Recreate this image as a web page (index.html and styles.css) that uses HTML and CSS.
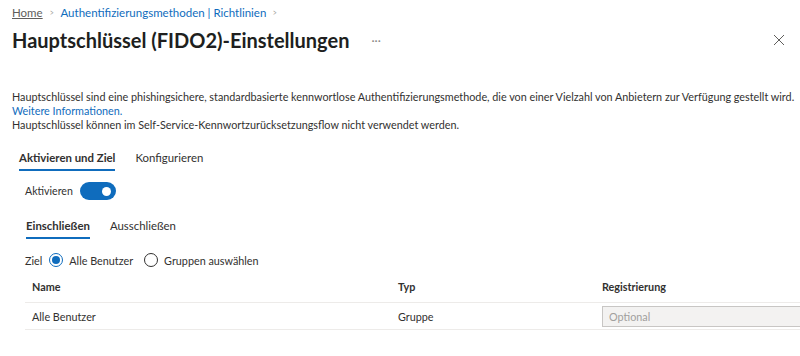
FILE: index.html
```html
<!DOCTYPE html>
<html lang="de">
<head>
    <meta charset="UTF-8">
    <meta name="viewport" content="width=device-width, initial-scale=1.0">
    <title>Hauptschlüssel (FIDO2)-Einstellungen</title>
    <link rel="stylesheet" href="styles.css">
</head>
<body>
    <nav class="breadcrumb">
        <a class="crumb home" href="#">Home</a>
        <span class="sep">&gt;</span>
        <a class="crumb" href="#">Authentifizierungsmethoden | Richtlinien</a>
        <span class="sep">&gt;</span>
    </nav>

    <header class="title-bar">
        <h1>Hauptschlüssel (FIDO2)-Einstellungen</h1>
        <span class="more">···</span>
        <button class="close" aria-label="Schließen">
            <svg width="12" height="12" viewBox="0 0 12 12"><path d="M1 1 L11 11 M11 1 L1 11" stroke="#605e5c" stroke-width="1"/></svg>
        </button>
    </header>

    <section class="intro">
        <p>Hauptschlüssel sind eine phishingsichere, standardbasierte kennwortlose Authentifizierungsmethode, die von einer Vielzahl von Anbietern zur Verfügung gestellt wird.</p>
        <p><a href="#">Weitere Informationen.</a></p>
        <p>Hauptschlüssel können im Self-Service-Kennwortzurücksetzungsflow nicht verwendet werden.</p>
    </section>

    <div class="tabs main-tabs">
        <button class="tab active">Aktivieren und Ziel</button>
        <button class="tab">Konfigurieren</button>
    </div>

    <div class="panel">
        <div class="toggle-row">
            <span>Aktivieren</span>
            <span class="toggle on"><span class="knob"></span></span>
        </div>

        <div class="tabs sub-tabs">
            <button class="tab active">Einschließen</button>
            <button class="tab">Ausschließen</button>
        </div>

        <div class="target-row">
            <span>Ziel</span>
            <label class="radio"><span class="dot checked"></span>Alle Benutzer</label>
            <label class="radio"><span class="dot"></span>Gruppen auswählen</label>
        </div>

        <table class="grid">
            <tr>
                <th class="col-name">Name</th>
                <th class="col-type">Typ</th>
                <th>Registrierung</th>
            </tr>
            <tr>
                <td>Alle Benutzer</td>
                <td>Gruppe</td>
                <td><div class="select disabled">Optional</div></td>
            </tr>
        </table>
    </div>
</body>
</html>
```

FILE: styles.css
```css
body {
    font-family: "Lato", "Noto Sans", sans-serif;
    font-size: 10.8px;
    color: #323130;
    margin: 0;
    padding: 0;
    background-color: #fff;
    overflow: hidden;
}

a {
    color: #0f6cbd;
    text-decoration: none;
}

button {
    font-family: inherit;
    background: none;
    border: none;
    padding: 0;
    cursor: pointer;
    color: inherit;
}

.breadcrumb {
    display: flex;
    align-items: center;
    gap: 6px;
    padding: 3px 12px 0;
    height: 18px;
    font-size: 11.5px;
}

.breadcrumb .home {
    color: #605e5c;
    text-decoration: underline;
}

.breadcrumb .sep {
    color: #a19f9d;
    font-size: 10px;
    transform: scaleX(0.7);
}

.title-bar {
    display: flex;
    align-items: center;
    padding: 0 12px;
    height: 38px;
}

.title-bar h1 {
    margin: 0;
    font-size: 20px;
    font-weight: 700;
    color: #201f1e;
}

.more {
    margin-left: 22px;
    color: #8a8886;
    font-size: 12px;
}

.close {
    margin-left: auto;
    margin-right: 3px;
    display: flex;
}

.intro {
    padding: 31px 0 0 12px;
    line-height: 14px;
}

.intro p {
    margin: 0;
    white-space: nowrap;
}

.tabs {
    display: flex;
    gap: 20px;
}

.tab {
    font-size: 11.4px;
    padding: 0 0 5px;
    border-bottom: 2px solid transparent;
}

.tab.active {
    font-weight: 700;
    border-bottom-color: #0f6cbd;
}

.main-tabs {
    padding: 19px 19px 0;
}

.panel {
    padding: 0 0 0 25px;
}

.toggle-row {
    display: flex;
    align-items: center;
    gap: 7px;
    margin-top: 11px;
    height: 18px;
    font-size: 10.6px;
}

.toggle {
    width: 36px;
    height: 18px;
    border-radius: 9px;
    background-color: #0f6cbd;
    display: flex;
    align-items: center;
    justify-content: flex-end;
    padding-right: 5px;
    box-sizing: border-box;
}

.knob {
    width: 9px;
    height: 9px;
    border-radius: 50%;
    background-color: #fff;
}

.sub-tabs {
    margin-top: 19px;
    padding-left: 1px;
}

.target-row {
    display: flex;
    align-items: center;
    gap: 7px;
    margin-top: 12px;
    height: 18px;
}

.radio {
    display: flex;
    align-items: center;
    gap: 6px;
    margin-right: 4px;
}

.dot {
    width: 14px;
    height: 14px;
    border: 1px solid #323130;
    border-radius: 50%;
    box-sizing: border-box;
    display: flex;
    align-items: center;
    justify-content: center;
}

.dot.checked {
    border-color: #0f6cbd;
}

.dot.checked::after {
    content: "";
    width: 8px;
    height: 8px;
    border-radius: 50%;
    background-color: #0f6cbd;
}

.grid {
    border-collapse: collapse;
    width: calc(100% + 8px);
    margin-top: 2px;
}

.grid th {
    font-weight: 700;
    text-align: left;
    padding: 0 7px;
    height: 31px;
    border-bottom: 1px solid #edebe9;
}

.grid td {
    padding: 0 7px;
    height: 26px;
    border-bottom: 1px solid #edebe9;
}

.col-name {
    width: 352px;
}

.col-type {
    width: 190px;
}

.select {
    height: 19px;
    line-height: 19px;
    padding: 0 6px;
    border: 1px solid #c8c6c4;
    border-right: none;
    background-color: #f3f2f1;
    color: #a19f9d;
}
```
